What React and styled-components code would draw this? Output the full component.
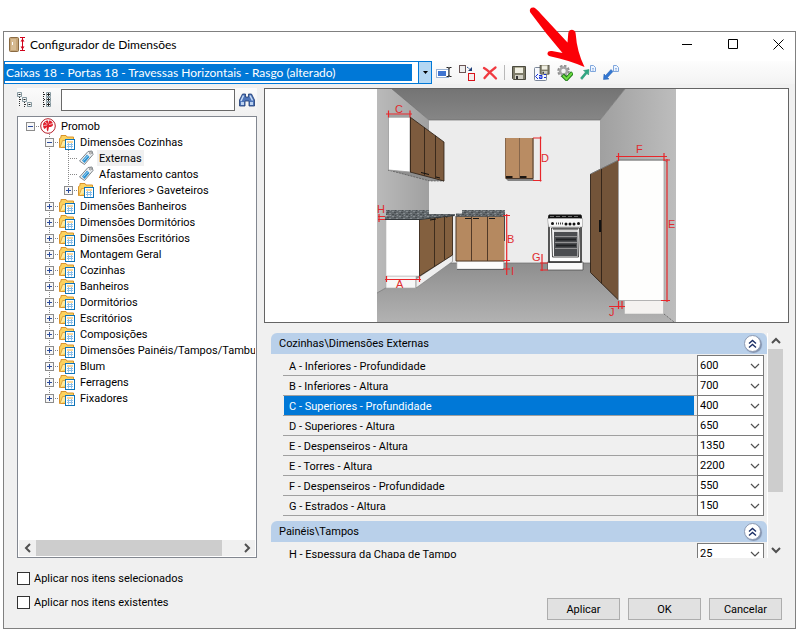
import React, { useState } from 'react'
import styled, { createGlobalStyle } from 'styled-components';

//Tree nodes, "depth" gives the indentation and "kind" the icon.
const treeNodes = [
    { label: 'Promob', depth: 0, kind: 'brand', box: 'minus' },
    { label: 'Dimensões Cozinhas', depth: 1, kind: 'folder', box: 'minus' },
    { label: 'Externas', depth: 2, kind: 'tag' },
    { label: 'Afastamento cantos', depth: 2, kind: 'tag' },
    { label: 'Inferiores > Gaveteiros', depth: 2, kind: 'folder', box: 'plus', last: true },
    { label: 'Dimensões Banheiros', depth: 1, kind: 'folder', box: 'plus' },
    { label: 'Dimensões Dormitórios', depth: 1, kind: 'folder', box: 'plus' },
    { label: 'Dimensões Escritórios', depth: 1, kind: 'folder', box: 'plus' },
    { label: 'Montagem Geral', depth: 1, kind: 'folder', box: 'plus' },
    { label: 'Cozinhas', depth: 1, kind: 'folder', box: 'plus' },
    { label: 'Banheiros', depth: 1, kind: 'folder', box: 'plus' },
    { label: 'Dormitórios', depth: 1, kind: 'folder', box: 'plus' },
    { label: 'Escritórios', depth: 1, kind: 'folder', box: 'plus' },
    { label: 'Composições', depth: 1, kind: 'folder', box: 'plus' },
    { label: 'Dimensões Painéis/Tampos/Tambura', depth: 1, kind: 'folder', box: 'plus' },
    { label: 'Blum', depth: 1, kind: 'folder', box: 'plus' },
    { label: 'Ferragens', depth: 1, kind: 'folder', box: 'plus' },
    { label: 'Fixadores', depth: 1, kind: 'folder', box: 'plus', last: true },
];

const groups = [
    {
        title: 'Cozinhas\\Dimensões Externas',
        rows: [
            ['A - Inferiores - Profundidade', '600'],
            ['B - Inferiores - Altura', '700'],
            ['C - Superiores - Profundidade', '400'],
            ['D - Superiores - Altura', '650'],
            ['E - Despenseiros - Altura', '1350'],
            ['E - Torres - Altura', '2200'],
            ['F - Despenseiros - Profundidade', '550'],
            ['G - Estrados - Altura', '150'],
        ],
    },
    {
        title: 'Painéis\\Tampos',
        rows: [['H - Espessura da Chapa de Tampo', '25']],
    },
];

const Icon = ({ children, size = 16 }) => (
    <svg width={size} height={size} viewBox="0 0 16 16" aria-hidden="true">{children}</svg>
);

const AppIcon = () => (
    <Icon>
        <rect x="0.5" y="0.5" width="9" height="14" rx="1" fill="#c6a678" stroke="#8a6a42" />
        <path d="M2 2h5v11H2z" fill="#d6bb92" />
        <path d="M3.5 5v3" stroke="#fff" />
        <path d="M11 .5h5M11 13.500h5M13.500 1v12" stroke="#d0021b" />
        <path d="M11.500 4.500l2-3 2 3zM11.500 9.500l2 3 2-3z" fill="#d0021b" />
    </Icon>
);

const RenameIcon = () => (
    <Icon>
        <rect x="0.5" y="4.5" width="12" height="8" fill="#fff" stroke="#9db4d4" />
        <rect x="2" y="6" width="8" height="5" fill="#3f74d0" />
        <path d="M10.500 2.500h2l.5 1 .5-1h2M13 3v8M10.500 11.500h2l.5-1 .5 1h2" stroke="#222" fill="none" />
    </Icon>
);

const ReplaceIcon = () => (
    <Icon>
        <rect x="0.5" y="0.5" width="6" height="7" fill="#eee" stroke="#6b5555" />
        <path d="M8 2l4 3" stroke="#1f4b8f" strokeDasharray="2 1" />
        <path d="M13 2v4H9z" fill="#1f3f7a" />
        <rect x="9.5" y="8.5" width="6" height="7" fill="#f4eded" stroke="#d8121a" />
    </Icon>
);

const DeleteIcon = () => (
    <Icon>
        <path d="M2 3Q7 6 14 13.500M13.500 2.500Q7 7 2.500 13" stroke="#f03a40" strokeWidth="2.300" fill="none" strokeLinecap="round" />
    </Icon>
);

const Disk = () => (
    <>
        <path d="M1.5 1.5h13v13h-12l-1-1z" fill="#7d7b68" stroke="#4a493e" />
        <path d="M4 2h8v6H4z" fill="#f1f0e4" />
        <path d="M4 2h8v1H4z" fill="#b5b39b" />
        <path d="M4 10h8v4H4z" fill="#d0cfc4" />
        <path d="M5 11h2v3H5z" fill="#333" />
    </>
);

const SaveIcon = () => <Icon><Disk /></Icon>;

const SaveAsIcon = () => (
    <Icon>
        <rect x="0.5" y="2.5" width="12" height="13" rx="1" fill="#f6f8fc" stroke="#7b8698" />
        <g transform="translate(5 -1) scale(0.7)"><Disk /></g>
        <path d="M4 9l-2.500 2.500 2.500 2.500M10 9.500h2M10 12.500h2" stroke="#1530d8" fill="none" />
        <path d="M5 10.500h3v3H5.500v-1.500H8" stroke="#1530d8" fill="none" />
    </Icon>
);

const ApplyIcon = () => (
    <Icon>
        <circle cx="6.500" cy="6" r="5" fill="none" stroke="#8f8f8f" strokeWidth="2.500" strokeDasharray="2.400 1.500" />
        <circle cx="6.500" cy="6" r="3.500" fill="#f5f5f5" stroke="#a5a5a5" strokeWidth="2.500" />
        <path d="M5.500 10l4 4L15.500 7.500" stroke="#1f7a1b" strokeWidth="4" fill="none" />
        <path d="M6 10.500l3.500 3.500L15 8" stroke="#6fdc43" strokeWidth="2" fill="none" />
    </Icon>
);

const PageShape = () => (
    <>
        <path d="M10.500.5h3l2 2v4h-5z" fill="#eef5ff" stroke="#7fa6dc" />
        <path d="M12 3.500h2M12 5h2" stroke="#9dbbe6" />
    </>
);

const ExportIcon = () => (
    <Icon>
        <PageShape />
        <path d="M3.500 5.500L9 4.500 8.500 10 7 8.500 2 14.500.5 13 5.500 7z" fill="#2fa883" stroke="#218a6a" strokeWidth=".5" />
    </Icon>
);

const ImportIcon = () => (
    <Icon>
        <PageShape />
        <path d="M.5 14.500L1 9l1.500 1.500L8 4.500 10 6.500 4.500 12.500 6 14z" fill="#3477d1" stroke="#235fb0" strokeWidth=".5" />
    </Icon>
);

const CollapseTreeIcon = () => (
    <Icon>
        <path d="M2.500 5v10M3 7.500h3M7.500 10v5M8 12.500h3" stroke="#333" strokeDasharray="1 1" />
        <path d="M.5.5h4v4h-4zM5.500 5.500h4v4h-4zM10.500 10.500h4v4h-4z" fill="#f3f7f8" stroke="#8799a0" />
        <path d="M1.500 2.500h2M6.500 7.500h2M11.500 12.500h2" stroke="#222" />
    </Icon>
);

const ExpandTreeIcon = () => (
    <Icon>
        <path d="M4.500 0v16M5 2.500h3M5 7.500h3M5 12.500h3" stroke="#222" strokeDasharray="1 1" />
        <path d="M7.500.5h4v4h-4zM7.500 5.500h4v4h-4zM7.500 10.500h4v4h-4z" fill="#f3f7f8" stroke="#8799a0" />
        <path d="M8 2.500h3M8 7.500h3M8 12.500h3M9.500 1v3M9.500 6v3M9.500 11v3" stroke="#222" />
    </Icon>
);

const SearchIcon = () => (
    <Icon>
        <path d="M3.500 2h3v3h3V2h3l3 6v6h-5.500V9h-4v5H.5V8z" fill="#4d74b8" stroke="#1d3970" strokeWidth=".8" />
        <path d="M4.500 3.500L2 9M11 3.500l2.500 5" stroke="#c8dcf6" strokeWidth="1.500" />
        <path d="M2 10h3v3H2zM11 10h3v3h-3z" fill="#bcd2f0" />
    </Icon>
);

const BrandIcon = () => (
    <Icon>
        <circle cx="8" cy="8" r="7.300" fill="#fff" stroke="#b81f2a" />
        <path d="M3 7C3 4.500 5.500 2.500 8 2.500V6l1-3.500C11.500 2.500 13 4.500 13 6.500c0 2-2 2.500-4 2.500L8 13.500C6.500 13 6.500 11 7 9L4.500 11C3.500 10 3 8.500 3 7z" fill="#e01f2c" />
        <path d="M3.500 7.500L7 7M5 4l2.500 2M9 6.500l4-1" stroke="#fff" strokeWidth=".7" fill="none" />
    </Icon>
);

const FolderIcon = () => (
    <Icon>
        <path d="M.5 13.500v-9l1.500-1V1.500h5l1 1.500h6.500v10.500z" fill="#fbd25f" stroke="#d8922c" />
        <path d="M1 13.500L3.500 6.500H15" fill="#ffeaa0" stroke="#e0a63f" />
        <rect x="6.500" y="5.500" width="9" height="10" fill="#fff" stroke="#0f74b8" />
        <path d="M8 8h6" stroke="#f3b13c" />
        <path d="M8 10.500h6M8 12.500h6M9.500 9V14.500M12.500 9V14.500" stroke="#8abfea" />
    </Icon>
);

const TagIcon = () => (
    <Icon>
        <path d="M1.500 11L10 1.500l4-.5 1 3.500-8.500 10z" fill="#eef1f3" stroke="#7f8589" />
        <path d="M4 10.500l5-6 2.500 2.500-5 6z" fill="#2f93d2" />
        <path d="M5.500 10.500l4.500-5" stroke="#a9d9f4" />
        <circle cx="12.500" cy="3" r="1" fill="#fff" stroke="#777" strokeWidth=".8" />
    </Icon>
);

const nodeIcons = { brand: BrandIcon, folder: FolderIcon, tag: TagIcon };

const Chevron = ({ dir, bold }) => {
    const paths = {
        down: 'M1 3l4 4 4-4',
        up: 'M1 7l4-4 4 4',
        left: 'M7 1L3 5l4 4',
        right: 'M3 1l4 4-4 4',
    };
    return (
        <svg width="10" height="10" viewBox="0 0 10 10" aria-hidden="true">
            <path d={paths[dir]} fill="none" stroke="#505050" strokeWidth={bold ? 2 : 1.2} />
        </svg>
    );
};

//One indentation step of the tree, with its dotted guide lines
const Guide = ({ up, down, across }) => (
    <svg width="19" height="16" viewBox="0 0 19 16" aria-hidden="true">
        {up && <path d="M9.500 0v8" stroke="#888" strokeDasharray="1 1" />}
        {down && <path d="M9.500 8v8" stroke="#888" strokeDasharray="1 1" />}
        {across && <path d="M9 8.500h10" stroke="#888" strokeDasharray="1 1" />}
    </svg>
);

const TreeRow = ({ node, selected, onSelect }) => {
    const NodeIcon = nodeIcons[node.kind];
    return (
        <Node>
            {node.depth > 0 && <Guide />}
            {node.depth > 1 && <Guide up down />}
            <Step>
                <Guide up={node.depth > 0} down={node.depth > 0 && !node.last} across />
                {node.box && (
                    <Expander aria-label={(node.box === 'plus' ? 'Expandir ' : 'Recolher ') + node.label}>
                        <svg width="9" height="9" viewBox="0 0 9 9" aria-hidden="true">
                            <rect x="0.5" y="0.5" width="8" height="8" fill="#f7f7f7" stroke="#8c8c8c" />
                            <path d={node.box === 'plus' ? 'M2 4.500h5M4.500 2v5' : 'M2 4.500h5'} stroke="#2b4b9b" />
                        </svg>
                    </Expander>
                )}
            </Step>
            <NodeImage><NodeIcon /></NodeImage>
            <NodeLabel $selected={selected} onClick={onSelect}>{node.label}</NodeLabel>
        </Node>
    );
};

//Drawing of the kitchen with the measured dimensions in red
const Kitchen = () => (
    <Room viewBox="377 89 299 233" role="img" aria-label="Cozinha com cotas">
        <defs>
            <linearGradient id="ceiling" x1="0" y1="0" x2="0" y2="1">
                <stop offset="0" stopColor="#747474" /><stop offset="1" stopColor="#868686" />
            </linearGradient>
            <linearGradient id="leftWall" x1="0" y1="0" x2="1" y2="0">
                <stop offset="0" stopColor="#bababa" /><stop offset="1" stopColor="#a0a0a0" />
            </linearGradient>
            <linearGradient id="rightWall" x1="0" y1="0" x2="1" y2="0">
                <stop offset="0" stopColor="#a0a0a0" /><stop offset="1" stopColor="#bdbdbd" />
            </linearGradient>
            <linearGradient id="floor" x1="0" y1="0" x2="0" y2="1">
                <stop offset="0" stopColor="#8e8e8e" /><stop offset="1" stopColor="#b2b2b2" />
            </linearGradient>
            <pattern id="granite" width="7" height="5" patternUnits="userSpaceOnUse">
                <rect width="7" height="5" fill="#62686c" />
                <path d="M0 1.500h2M4 3.500h2M5 .5h1" stroke="#858b8f" />
                <path d="M2 2.500h2M0 4.500h2M3 .5h1" stroke="#484d51" />
            </pattern>
        </defs>

        <path d="M429 120h171v144H429z" fill="#ececec" />
        <path d="M391 89h234l-25 31H429z" fill="url(#ceiling)" />
        <path d="M377 89h15l37 31v143l-52 30z" fill="url(#leftWall)" />
        <path d="M625 89h51v233h-4l-72-59V120z" fill="url(#rightWall)" />
        <path d="M377 293l52-30h171l73 59H377z" fill="url(#floor)" />
        <path d="M377 293l52-30M392 89l37 31h171l25-31M429 263h171" stroke="#6f6f6f" strokeWidth=".7" fill="none" />

        {/* upper cabinets */}
        <path d="M388 170h22l34 11h-14z" fill="#8e8e8e" stroke="#444" strokeWidth=".6" strokeDasharray="2 1" />
        <path d="M388.500 117H410v55l-21.500-2z" fill="#fff" stroke="#999" strokeWidth=".8" />
        <path d="M388 115h22l1 2.500h-23z" fill="#a2a2a2" />
        <path d="M410 117l34 25v39l-34-9z" fill="#7d5b3e" />
        <path d="M410.500 117v55M424.500 127.500v48M435.500 135.500v43M410 117l34 25v39l-34-9" stroke="#2b1e14" strokeWidth=".8" fill="none" />
        <path d="M421 172.500l4 1M425 173.500l4 1M436 177l4 1" stroke="#111" />
        <path d="M505.500 138h28v40h-28z" fill="#b98c63" />
        <path d="M505.500 138v40M519.500 138v40" stroke="#86664b" />
        <path d="M533 138v40M505.500 178.500h28" stroke="#4c3a2d" />
        <path d="M506 177h6.500M520 177h6.500" stroke="#1d1713" strokeWidth="2" />
        <path d="M506 179l2 2h25l1-2z" fill="#858585" />

        {/* base cabinets on the left wall */}
        <path d="M386 276l30 0v12h-30z" fill="#f7f7f7" stroke="#aaa" strokeWidth=".6" />
        <path d="M416 279l36.500-24v6.500L416 288z" fill="#eee" stroke="#777" strokeWidth=".6" />
        <path d="M386 219h34v57h-34z" fill="#fff" stroke="#bbb" strokeWidth=".6" />
        <path d="M419.500 218l33-4v41l-33 21z" fill="#83603f" />
        <path d="M419.500 218v58l33-21v-40M434.500 217v49.500M444.500 216v43.500" stroke="#37271a" strokeWidth=".9" fill="none" />
        <path d="M430 220l6-1M437 218l4-1M446 217l4-1" stroke="#111" />
        <path d="M386 210h43v5h-43zM385 216l14-2h56v2l-35 3.500h-35z" fill="url(#granite)" />
        <path d="M385 219.500h35l34-4" stroke="#33373a" fill="none" />

        {/* base cabinets on the back wall */}
        <path d="M457 261h46.500v8H457z" fill="#fcfcfc" stroke="#bbb" strokeWidth=".6" />
        <path d="M456 216h48.500v45H456z" fill="#b58960" />
        <path d="M456 216v45h48.500M471.500 216v45M487.500 216v45" stroke="#513a28" fill="none" />
        <path d="M504.500 216v25" stroke="#444" />
        <path d="M465 218.500h6M473 218.500h6M489 218.500h6" stroke="#171717" />
        <path d="M462 210h43v5h-43zM456 213.500h49v3h-49z" fill="url(#granite)" />
        <path d="M456 216.500h49M457 269.500h47" stroke="#44484b" strokeWidth=".7" />

        {/* stove */}
        <path d="M547.500 262h35.500v8h-35.500z" fill="#fafafa" stroke="#444" strokeWidth=".7" />
        <path d="M549 216h32v46h-32z" fill="#fff" stroke="#222" strokeWidth="1.500" />
        <path d="M549 214.500h32l1 4h-34z" fill="#111" />
        <path d="M547.500 218.500h35v8.500h-34z" fill="#f8f8f8" stroke="#888" strokeWidth=".5" />
        <path d="M550 216.500h30" stroke="#aaa" strokeDasharray="4 2" strokeWidth=".6" />
        <g fill="#111">
            <circle cx="552.500" cy="223.500" r="1.500" /><circle cx="566" cy="224" r="1.500" />
            <circle cx="570" cy="224" r="1.500" /><circle cx="574" cy="224" r="1.500" /><circle cx="578.500" cy="223.500" r="1.500" />
        </g>
        <path d="M556 223.500h7" stroke="#444" strokeWidth="2" strokeDasharray="1 1" />
        <path d="M551.500 228h28l-1 29h-26z" fill="#f6f6f6" stroke="#222" strokeWidth=".8" />
        <path d="M554 232h23.500v24H554z" fill="#4b4d50" />
        <path d="M553 229h25" stroke="#222" />
        <path d="M554 231h23.500M555 236.500h22M555 242.500h22M555 248.500h22" stroke="#a5a5a5" strokeWidth=".8" />
        <path d="M556 239.500h20M556 245.500h20" stroke="#202224" strokeWidth="2" />

        {/* tall cabinet */}
        <path d="M590.500 174l28-14v140l-28-27.500z" fill="#735439" />
        <path d="M590.500 174v98.500l28 27.500M601.500 168.500v115" stroke="#2f2116" fill="none" strokeWidth=".9" />
        <path d="M590.500 174l28-14h46l2.500 2" stroke="#777" fill="none" />
        <path d="M624.500 300h39v14h-39z" fill="#f4f2f0" stroke="#aaa" strokeWidth=".5" />
        <path d="M618.500 160.500H664v140h-45.500z" fill="#fefefd" stroke="#999" strokeWidth=".7" />
        <path d="M664 314l10 8" stroke="#555" strokeDasharray="1 1" />
        <path d="M600 220v12" stroke="#111" strokeWidth="2" />

        <g stroke="#e8262a" strokeWidth="1.200" fill="none">
            <path d="M386 114h26M388.500 110.500v7M410 110.500v7" />
            <path d="M533 138h8.500M540.500 136.500v45M533 180.500h8.500" />
            <path d="M616 156.500h51M618.500 153v8M664 153v8" />
            <path d="M667 159v143M664 160h6M661 300.500h9" />
            <path d="M506.700 214v61M503 215.500h7M503 260.500h7M503 269h7" />
            <path d="M542 254v17M540 263h8M540 270h8" />
            <path d="M385 279.500h36M386.500 276v6M419.500 276v6" />
            <path d="M379 214v8M378 216.500h7M378 219.500h7" />
            <path d="M609 306.500h16M618.500 301v8M622 301v8" />
        </g>
        <g fill="#e02b2e" fontFamily="Liberation Sans, Arial, sans-serif" fontSize="11">
            <text x="395" y="113">C</text>
            <text x="541" y="162">D</text>
            <text x="636" y="153">F</text>
            <text x="668" y="228">E</text>
            <text x="507" y="243">B</text>
            <text x="511" y="275">I</text>
            <text x="532" y="261">G</text>
            <text x="396" y="288">A</text>
            <text x="377" y="213">H</text>
            <text x="609" y="316">J</text>
        </g>
    </Room>
);

const App = () => {
    const [node, setNode] = useState('Externas');
    const [row, setRow] = useState('C - Superiores - Profundidade');

    return (
    <Page>
        <GlobalStyle />
        <Frame>
            <TitleBar>
                <AppIcon />
                <Title>Configurador de Dimensões</Title>
                <WindowButton aria-label="Minimizar">
                    <svg width="11" height="11"><path d="M0 5.500h10" stroke="#000" /></svg>
                </WindowButton>
                <WindowButton aria-label="Maximizar">
                    <svg width="11" height="11"><path d="M.5.5h9v9h-9z" stroke="#000" fill="none" /></svg>
                </WindowButton>
                <WindowButton aria-label="Fechar">
                    <svg width="11" height="11"><path d="M.5.5l10 10M10.500.5l-10 10" stroke="#000" /></svg>
                </WindowButton>
            </TitleBar>

            <Toolbar>
                <Combo>
                    <ComboSelect aria-label="Configuração">
                        <option>Caixas 18 - Portas 18 - Travessas Horizontais - Rasgo (alterado)</option>
                    </ComboSelect>
                    <ComboArrow><svg width="5" height="3"><path d="M0 0h5L2.500 3z" /></svg></ComboArrow>
                </Combo>
                <ToolButton aria-label="Renomear"><RenameIcon /></ToolButton>
                <ToolButton aria-label="Substituir"><ReplaceIcon /></ToolButton>
                <ToolButton aria-label="Excluir"><DeleteIcon /></ToolButton>
                <Divider />
                <ToolButton aria-label="Salvar"><SaveIcon /></ToolButton>
                <ToolButton aria-label="Salvar como"><SaveAsIcon /></ToolButton>
                <ToolButton aria-label="Aplicar configuração"><ApplyIcon /></ToolButton>
                <ToolButton aria-label="Exportar"><ExportIcon /></ToolButton>
                <ToolButton aria-label="Importar"><ImportIcon /></ToolButton>
            </Toolbar>

            <Body>
                <Sidebar>
                    <SearchBar>
                        <SmallButton aria-label="Recolher tudo"><CollapseTreeIcon /></SmallButton>
                        <SmallButton aria-label="Expandir tudo"><ExpandTreeIcon /></SmallButton>
                        <SearchInput type="text" aria-label="Pesquisar" />
                        <SmallButton aria-label="Localizar"><SearchIcon /></SmallButton>
                    </SearchBar>
                    <Tree>
                        <Nodes>
                            {treeNodes.map((n) => (
                                <TreeRow key={n.label} node={n} selected={n.label === node} onSelect={() => setNode(n.label)} />
                            ))}
                        </Nodes>
                        <HorizontalScroll>
                            <ScrollButton aria-label="Esquerda"><Chevron dir="left" bold /></ScrollButton>
                            <Track><Thumb $share={92} /></Track>
                            <ScrollButton aria-label="Direita"><Chevron dir="right" bold /></ScrollButton>
                        </HorizontalScroll>
                    </Tree>
                </Sidebar>

                <Main>
                    <Preview><Kitchen /></Preview>
                    <Properties>
                        <Groups>
                            {groups.map((group) => (
                                <Group key={group.title}>
                                    <GroupHeader>
                                        <GroupTitle>{group.title}</GroupTitle>
                                        <CollapseButton aria-label={'Recolher ' + group.title}>
                                            <svg width="9" height="10"><path d="M1 4.500l3.500-3 3.500 3M1 8.500l3.500-3 3.500 3" stroke="#1c2f66" strokeWidth="1.400" fill="none" /></svg>
                                        </CollapseButton>
                                    </GroupHeader>
                                    <Rows>
                                        {group.rows.map(([label, value]) => (
                                            <Row key={label}>
                                                <RowLabel htmlFor={label} $selected={label === row} onClick={() => setRow(label)}>
                                                    <span>{label}</span>
                                                </RowLabel>
                                                <Field>
                                                    <FieldSelect id={label}><option>{value}</option></FieldSelect>
                                                    <FieldArrow><Chevron dir="down" /></FieldArrow>
                                                </Field>
                                            </Row>
                                        ))}
                                    </Rows>
                                </Group>
                            ))}
                        </Groups>
                        <VerticalScroll>
                            <ScrollButton aria-label="Para cima"><Chevron dir="up" bold /></ScrollButton>
                            <Track $vertical><Thumb $vertical $share={74} /></Track>
                            <ScrollButton aria-label="Para baixo"><Chevron dir="down" bold /></ScrollButton>
                        </VerticalScroll>
                    </Properties>
                </Main>
            </Body>

            <Footer>
                <Checks>
                    <Check><CheckBox type="checkbox" />Aplicar nos itens selecionados</Check>
                    <Check><CheckBox type="checkbox" />Aplicar nos itens existentes</Check>
                </Checks>
                <Actions>
                    <Action>Aplicar</Action>
                    <Action>OK</Action>
                    <Action>Cancelar</Action>
                </Actions>
            </Footer>
        </Frame>

        {/* red pointer over the export button */}
        <Pointer width="60" height="70" viewBox="528 0 60 70" aria-hidden="true">
            <path
                d="M530 12Q529 7 534 7.500Q537 9 541 14L567.500 42.500L568.300 33Q569 29.700 572 29.700Q575.500 30 575.700 34Q577 52 584.500 67Q568 60 551 56.500Q547 55.500 547.500 53Q548 50.500 552 51L562.500 53Q546 34 530 12Z"
                fill="#fb0007"
            />
        </Pointer>
    </Page>
    );
};

const GlobalStyle = createGlobalStyle`
    *{
        box-sizing: border-box;
    }

    body{
        margin: 0;
        background: #ffffff;
        color: #000000;
        font-family: Roboto, 'Liberation Sans', sans-serif;
        font-size: 11px;
    }

    button, input, select{
        font: inherit;
        color: inherit;
        padding: 0;
        margin: 0;
        border-radius: 0;
    }

    svg{
        display: block;
        flex: none;
    }
`;

const Page = styled.div`
    position: relative;
    display: flex;
    height: 100vh;
    padding: 31px 3px 3px;
`;

const Frame = styled.div`
    flex: 1;
    min-width: 0;
    display: flex;
    flex-direction: column;
    border: 1px solid #808080;
    background: #f0f0f0;
`;

const TitleBar = styled.header`
    display: flex;
    align-items: center;
    height: 29px;
    flex: none;
    padding: 0 0 4px 5px;
    background: #ffffff;
`;

const Title = styled.h1`
    flex: 1;
    margin: 0 0 0 5px;
    font-family: Lato, 'Open Sans', sans-serif;
    font-size: 12px;
    font-weight: 400;
`;

const PlainButton = styled.button`
    display: flex;
    align-items: center;
    justify-content: center;
    border: none;
    background: transparent;
`;

const WindowButton = styled(PlainButton)`
    width: 46px;
    height: 25px;

    &:last-child{
        width: 34px;
        margin-left: 5px;
    }
`;

const Toolbar = styled.div`
    display: flex;
    align-items: center;
    flex: none;
    height: 23px;
    background: linear-gradient(#fdfdfd, #f3f3f3);
`;

const Combo = styled.div`
    display: grid;
    grid-template-columns: 1fr 13px;
    flex: 0 1 428px;
    height: 23px;
    border: 1px solid #0078d7;
    background: #ffffff;
`;

const ComboSelect = styled.select`
    grid-area: 1 / 1 / 2 / 2;
    appearance: none;
    min-width: 0;
    margin: 2px 6px 2px 0;
    padding-left: 1px;
    border: none;
    background: #0078d7;
    color: #ffffff;
    font-family: Lato, 'Open Sans', sans-serif;
    font-size: 12px;
    line-height: 17px;
    outline: none;
`;

const ComboArrow = styled.span`
    display: flex;
    align-items: center;
    justify-content: center;
    border-left: 1px solid #0078d7;
    background: #b3d7f3;
    pointer-events: none;
`;

const ToolButton = styled(PlainButton)`
    width: 23px;
    height: 23px;
`;

const Divider = styled.span`
    width: 1px;
    height: 15px;
    margin: 0 2px 0 3px;
    background: #b8b8b8;
`;

const Body = styled.div`
    flex: 1;
    min-height: 0;
    display: grid;
    grid-template-columns: 240px minmax(0, 1fr);
    grid-template-rows: minmax(0, 1fr);
    gap: 7px;
    padding: 4px 6px 0 13px;
`;

const Sidebar = styled.div`
    display: flex;
    flex-direction: column;
    min-height: 0;
`;

const SearchBar = styled.div`
    display: flex;
    align-items: center;
    gap: 4px;
    height: 28px;
    flex: none;
    padding-bottom: 4px;
    background: linear-gradient(#fbfbfb, #f0f0f0);
`;

const SmallButton = styled(PlainButton)`
    width: 18px;
    height: 18px;
    flex: none;
    justify-content: flex-start;
`;

const SearchInput = styled.input`
    flex: 1;
    min-width: 0;
    height: 22px;
    border: 1px solid #696969;
    background: #ffffff;
`;

const Tree = styled.div`
    flex: 1;
    min-height: 0;
    display: flex;
    flex-direction: column;
    padding: 1px;
    border: 1px solid #828790;
    background: #ffffff;
`;

const Nodes = styled.ul`
    flex: 1;
    min-height: 0;
    overflow: hidden;
    margin: 0;
    padding: 0 0 0 2px;
    list-style: none;
`;

const Node = styled.li`
    display: flex;
    height: 16px;
`;

const Step = styled.span`
    display: grid;
    place-items: center;
    flex: none;

    > *{
        grid-area: 1 / 1;
    }
`;

const Expander = styled(PlainButton)`
    width: 9px;
    height: 9px;
`;

const NodeImage = styled.span`
    flex: none;
    margin-right: 3px;
`;

const NodeLabel = styled.span`
    flex: none;
    padding: 1px 2px 0;
    line-height: 16px;
    white-space: nowrap;
    cursor: default;
    background: ${(props) => (props.$selected ? '#f0f0f0' : 'transparent')};
`;

const HorizontalScroll = styled.div`
    display: flex;
    flex: none;
    height: 16px;
    background: #f0f0f0;
`;

const VerticalScroll = styled.div`
    display: flex;
    flex-direction: column;
    flex: none;
    width: 16px;
    border-left: 1px solid #ffffff;
`;

const ScrollButton = styled(PlainButton)`
    flex: none;
    min-width: 15px;
    height: 16px;

    ${HorizontalScroll} &{
        width: 17px;
    }
`;

const Track = styled.div`
    flex: 1;
    display: flex;
    flex-direction: ${(props) => (props.$vertical ? 'column' : 'row')};
`;

const Thumb = styled.div`
    flex: 0 0 ${(props) => props.$share}%;
    background: #cdcdcd;
`;

const Main = styled.main`
    display: flex;
    flex-direction: column;
    gap: 10px;
    min-height: 0;
`;

const Preview = styled.div`
    display: flex;
    justify-content: center;
    flex: none;
    border: 1px solid #646464;
    background: #ffffff;
`;

const Room = styled.svg`
    width: 299px;
    height: 233px;
`;

const Properties = styled.section`
    flex: 1;
    min-height: 0;
    display: flex;
    margin: 0 6px 0 7px;
`;

const Groups = styled.div`
    flex: 1;
    min-width: 0;
    overflow: hidden;
`;

const Group = styled.div`
    margin-bottom: 5px;
`;

const GroupHeader = styled.div`
    display: flex;
    align-items: center;
    height: 21px;
    padding: 0 6px 0 8px;
    border-radius: 6px 6px 0 0;
    background: #b9d0ea;
`;

const GroupTitle = styled.h2`
    flex: 1;
    margin: 0;
    font-size: 11px;
    font-weight: 400;
`;

const CollapseButton = styled(PlainButton)`
    width: 17px;
    height: 17px;
    border: 1px solid #8e9bb3;
    border-radius: 50%;
    background: #ffffff;
    box-shadow: 1px 1px 1px #8190ac;
`;

const Rows = styled.div`
    padding: 2px 3px 0 12px;
`;

const Row = styled.div`
    display: flex;
    height: 20px;
`;

const RowLabel = styled.label`
    flex: 1;
    padding: 0 3px 0 1px;
    border-bottom: 1px solid #a0a0a0;

    span{
        display: block;
        height: 19px;
        padding: 1px 0 0 5px;
        line-height: 19px;
        background: ${(props) => (props.$selected ? '#0078d7' : 'transparent')};
        color: ${(props) => (props.$selected ? '#ffffff' : '#000000')};
    }
`;

const Field = styled.div`
    display: grid;
    width: 67px;
    height: 21px;
    margin-top: -1px;
    border: 1px solid #7a7a7a;
    background: #ffffff;
`;

const FieldSelect = styled.select`
    grid-area: 1 / 1;
    appearance: none;
    padding: 0 0 1px 2px;
    border: none;
    background: transparent;
    line-height: 17px;
    outline: none;
`;

const FieldArrow = styled.span`
    grid-area: 1 / 1;
    place-self: center end;
    padding-right: 3px;
    pointer-events: none;
`;

const Footer = styled.footer`
    display: flex;
    justify-content: space-between;
    align-items: flex-end;
    flex: none;
    height: 70px;
    padding: 8px 13px;
`;

const Checks = styled.div`
    align-self: flex-start;
`;

const Check = styled.label`
    display: flex;
    align-items: center;
    gap: 4px;
    height: 24px;
`;

const CheckBox = styled.input`
    appearance: none;
    width: 13px;
    height: 13px;
    border: 1px solid #333333;
    background: #ffffff;

    &:checked{
        box-shadow: inset 0 0 0 2px #ffffff;
        background: #333333;
    }
`;

const Actions = styled.div`
    display: flex;
    gap: 8px;
`;

const Action = styled.button`
    width: 73px;
    height: 22px;
    border: 1px solid #adadad;
    background: #e1e1e1;
`;

const Pointer = styled.svg`
    position: absolute;
    top: 0;
    left: 528px;
    pointer-events: none;
`;

export default App;
